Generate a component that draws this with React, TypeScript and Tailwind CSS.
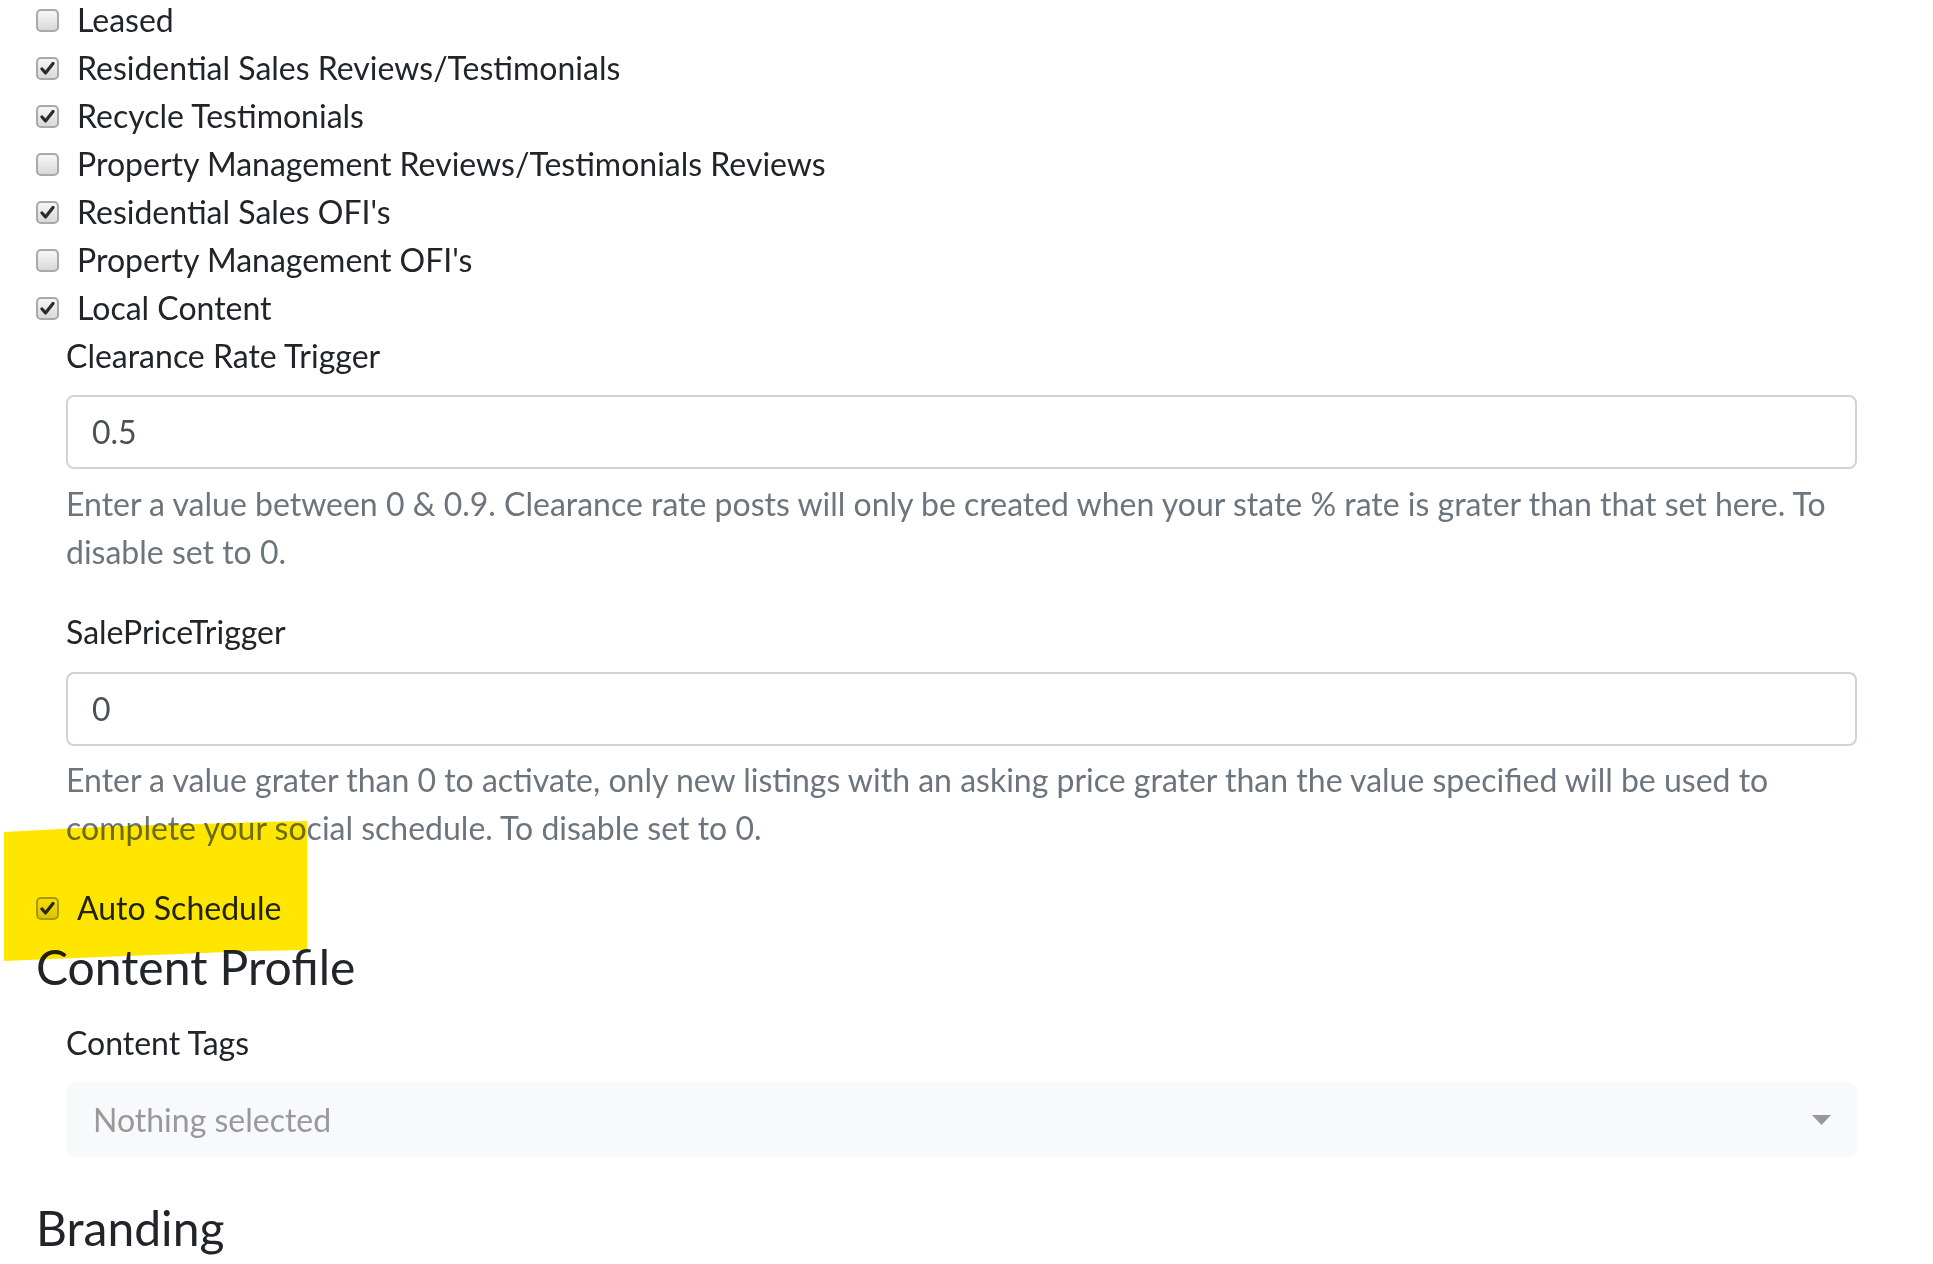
import React from 'react';

const options = [
  { label: 'Leased', checked: false },
  { label: 'Residential Sales Reviews/Testimonials', checked: true },
  { label: 'Recycle Testimonials', checked: true },
  { label: 'Property Management Reviews/Testimonials Reviews', checked: false },
  { label: "Residential Sales OFI's", checked: true },
  { label: "Property Management OFI's", checked: false },
  { label: 'Local Content', checked: true },
];

function Box({ checked }: { checked: boolean }) {
  return (
    <span className="flex h-[23px] w-[23px] shrink-0 items-center justify-center rounded-[5px] border-2 border-[#a9a9a9] bg-gradient-to-b from-[#f6f6f6] to-[#d9d9d9]">
      {checked && (
        <svg width="15" height="15" viewBox="0 0 15 15">
          <path d="M2 8 L5.5 12 L13 2.5" fill="none" stroke="#2b2b2b" strokeWidth="3.2" strokeLinecap="round" strokeLinejoin="round" />
        </svg>
      )}
    </span>
  );
}

function CheckRow({ label, checked }: { label: string; checked: boolean }) {
  return (
    <label className="flex h-12 items-center gap-[18px] text-[#212529]">
      <Box checked={checked} />
      <span>{label}</span>
    </label>
  );
}

export default function App() {
  return (
    <div
      className="relative h-[1264px] w-full overflow-hidden bg-white text-[32px] leading-[48px]"
      style={{ fontFamily: '"Lato", "Open Sans", sans-serif' }}
    >
      <div className="-mt-1 pl-[36px] pr-[76px]">
        {/* Checkbox list */}
        <div>
          {options.map((o) => (
            <CheckRow key={o.label} label={o.label} checked={o.checked} />
          ))}
        </div>

        <div className="pl-[30px]">
          {/* Clearance Rate Trigger */}
          <div className="text-[#212529]">Clearance Rate Trigger</div>
          <div className="mt-[15px] flex h-[74px] items-center rounded-lg border-2 border-[#ced4da] px-6 text-[#495057]">
            0.5
          </div>
          <p className="mt-[11px] text-[#6c757d]">
            Enter a value between 0 &amp; 0.9. Clearance rate posts will only be created when your state % rate is grater than that set here. To
            <br />
            disable set to 0.
          </p>

          {/* SalePriceTrigger */}
          <div className="mt-8 text-[#212529]">SalePriceTrigger</div>
          <div className="mt-4 flex h-[74px] items-center rounded-lg border-2 border-[#ced4da] px-6 text-[#495057]">
            0
          </div>
          <p className="mt-[10px] text-[#6c757d]">
            Enter a value grater than 0 to activate, only new listings with an asking price grater than the value specified will be used to
            <br />
            complete your social schedule. To disable set to 0.
          </p>
        </div>

        <div className="mt-8">
          <CheckRow label="Auto Schedule" checked={true} />
        </div>

        {/* Content Profile */}
        <h4 className="mt-[6px] text-[48px] leading-[58px] text-[#212529]">Content Profile</h4>
        <div className="pl-[30px]">
          <div className="mt-[23px] text-[#212529]">Content Tags</div>
          <div className="mt-[15px] flex h-[75px] items-center justify-between rounded-lg bg-[#f8f9fa] pl-[27px] pr-[26px] text-[#999999]">
            <span>Nothing selected</span>
            <svg width="19" height="10" viewBox="0 0 19 10">
              <path d="M0 0 H19 L9.5 10 Z" fill="#999999" />
            </svg>
          </div>
        </div>

        {/* Branding */}
        <h4 className="mt-[42px] text-[48px] leading-[58px] text-[#212529]">Branding</h4>
      </div>

      {/* highlighter mark */}
      <svg
        className="pointer-events-none absolute left-0 top-0 mix-blend-multiply"
        width="320"
        height="980"
        viewBox="0 0 320 980"
      >
        <path
          d="M4 832 L60 829 L120 826 L200 824 L260 822 L307 821 L307 950 L250 951 L180 954 L100 957 L4 961 Z"
          fill="#ffe600"
        />
      </svg>
    </div>
  );
}
